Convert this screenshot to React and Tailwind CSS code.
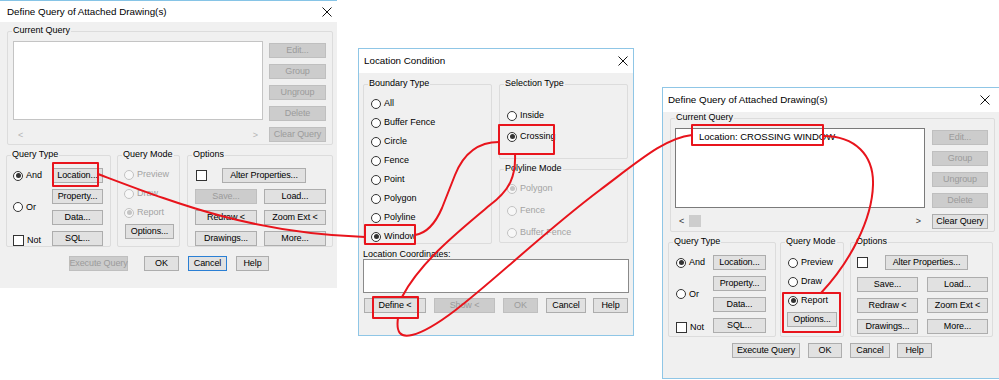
import React from "react";

function Btn({ w, children, disabled, def }) {
  const tone = disabled
    ? "bg-[#cccccc] border-[#bfbfbf] text-[#9b9b9b]"
    : def
    ? "bg-[#e1e1e1] border-[#2a7fd4] text-black"
    : "bg-[#e1e1e1] border-[#adadad] text-black";
  return (
    <div className={`h-[15px] shrink-0 flex items-center justify-center border leading-none whitespace-nowrap tracking-[-0.1px] ${tone} ${w}`}>
      {children}
    </div>
  );
}

function Radio({ checked, disabled, label }) {
  return (
    <div className="flex items-center h-[15px] gap-[3px] whitespace-nowrap">
      <span
        className={`w-[10px] h-[10px] shrink-0 rounded-full border flex items-center justify-center ${
          disabled ? "border-[#c2c2c2] bg-[#f7f7f7]" : "border-[#333333] bg-white"
        }`}
      >
        {checked && (
          <span className={`w-[5px] h-[5px] rounded-full ${disabled ? "bg-[#c4c4c4]" : "bg-[#333333]"}`} />
        )}
      </span>
      <span className={disabled ? "text-[#a3a3a3]" : "text-black"}>{label}</span>
    </div>
  );
}

function Check({ label }) {
  return (
    <div className="flex items-center h-[15px] gap-[3px] whitespace-nowrap">
      <span className="w-[11px] h-[11px] shrink-0 border border-[#333333] bg-white" />
      {label && <span>{label}</span>}
    </div>
  );
}

function Group({ label, className, children }) {
  return (
    <div className={`relative shrink-0 border border-[#dcdcdc] rounded-[2px] ${className}`}>
      <span className="absolute -top-[6px] left-[4px] px-[1px] bg-[#f0f0f0] leading-none text-black whitespace-nowrap">
        {label}
      </span>
      {children}
    </div>
  );
}

function CloseX() {
  return (
    <svg width="10" height="10" viewBox="0 0 10 10" className="shrink-0">
      <path d="M0.5 0.5 L9.5 9.5 M9.5 0.5 L0.5 9.5" stroke="#111" strokeWidth="1" fill="none" />
    </svg>
  );
}

function TitleBar({ title, h, pl, pr }) {
  return (
    <div className={`bg-white flex items-center justify-between shrink-0 ${h} ${pl} ${pr}`}>
      <span className="text-[9.8px] text-black whitespace-nowrap">{title}</span>
      <CloseX />
    </div>
  );
}

function LeftDialog() {
  return (
    <div className="absolute left-0 top-0 w-[337px] h-[288px] border-t border-[#86c4e6] bg-[#f0f0f0] flex flex-col">
      <TitleBar title="Define Query of Attached Drawing(s)" h="h-[21px]" pl="pl-[7px]" pr="pr-[5px]" />
      <div className="flex flex-col pl-[7px] pt-[9px]">
        <Group label="Current Query" className="w-[326px] h-[114px]">
          <div className="flex pl-[5px] pt-[9px]">
            <div className="flex flex-col">
              <div className="w-[250px] h-[79px] bg-white border border-[#c4c4c4]" />
              <div className="w-[250px] h-[30px] flex items-center justify-between px-[5px] text-[#b5b5b5]">
                <span>&lt;</span>
                <span>&gt;</span>
              </div>
            </div>
            <div className="flex flex-col gap-[6px] ml-[6px] pt-[2px]">
              <Btn w="w-[57px]" disabled>Edit...</Btn>
              <Btn w="w-[57px]" disabled>Group</Btn>
              <Btn w="w-[57px]" disabled>Ungroup</Btn>
              <Btn w="w-[57px]" disabled>Delete</Btn>
              <Btn w="w-[57px]" disabled>Clear Query</Btn>
            </div>
          </div>
        </Group>

        <div className="flex -ml-px mt-[10px]">
          <Group label="Query Type" className="w-[105px] h-[92px]">
            <div className="grid grid-cols-[39px_51px] grid-rows-[15px_15px_15px_15px] gap-y-[6px] pl-[6px] pt-[12px]">
              <div className="col-start-1 row-start-1"><Radio checked label="And" /></div>
              <div className="col-start-1 row-start-2 row-span-2 flex items-center"><Radio label="Or" /></div>
              <div className="col-start-1 row-start-4 pt-[2px]"><Check label="Not" /></div>
              <div className="col-start-2 row-start-1"><Btn w="w-[51px]">Location...</Btn></div>
              <div className="col-start-2 row-start-2"><Btn w="w-[51px]">Property...</Btn></div>
              <div className="col-start-2 row-start-3"><Btn w="w-[51px]">Data...</Btn></div>
              <div className="col-start-2 row-start-4"><Btn w="w-[51px]">SQL...</Btn></div>
            </div>
          </Group>
          <Group label="Query Mode" className="w-[63px] h-[92px] ml-[6px]">
            <div className="flex flex-col gap-[4px] pl-[6px] pt-[11px]">
              <Radio disabled label="Preview" />
              <Radio disabled label="Draw" />
              <Radio disabled checked label="Report" />
              <div className="ml-px"><Btn w="w-[49px]">Options...</Btn></div>
            </div>
          </Group>
          <Group label="Options" className="w-[146px] h-[92px] ml-[7px]">
            <div className="flex flex-col pl-[7px] pt-[12px]">
              <div className="flex items-center">
                <div className="ml-px"><Check /></div>
                <div className="ml-[15px]"><Btn w="w-[84px]">Alter Properties...</Btn></div>
              </div>
              <div className="grid grid-cols-[62px_62px] gap-x-[7px] gap-y-[6px] mt-[6px]">
                <Btn w="w-[62px]" disabled>Save...</Btn>
                <Btn w="w-[62px]">Load...</Btn>
                <Btn w="w-[62px]">Redraw &lt;</Btn>
                <Btn w="w-[62px]">Zoom Ext &lt;</Btn>
                <Btn w="w-[62px]">Drawings...</Btn>
                <Btn w="w-[62px]">More...</Btn>
              </div>
            </div>
          </Group>
        </div>

        <div className="flex mt-[9px] pl-[62px]">
          <Btn w="w-[59px]" disabled>Execute Query</Btn>
          <div className="ml-[16px]"><Btn w="w-[35px]">OK</Btn></div>
          <div className="ml-[9px]"><Btn w="w-[39px]" def>Cancel</Btn></div>
          <div className="ml-[9px]"><Btn w="w-[33px]">Help</Btn></div>
        </div>
      </div>
    </div>
  );
}

function MiddleDialog() {
  return (
    <div className="absolute left-[358px] top-[48px] w-[276px] h-[288px] border border-[#8fc6e6] bg-[#f0f0f0] flex flex-col">
      <TitleBar title="Location Condition" h="h-[24px]" pl="pl-[5px]" pr="pr-[5px]" />
      <div className="flex flex-col pl-[4px] pt-[11px]">
        <div className="flex">
          <Group label="Boundary Type" className="w-[129px] h-[160px]">
            <div className="flex flex-col gap-[4px] pl-[7px] pt-[11px]">
              <Radio label="All" />
              <Radio label="Buffer Fence" />
              <Radio label="Circle" />
              <Radio label="Fence" />
              <Radio label="Point" />
              <Radio label="Polygon" />
              <Radio label="Polyline" />
              <Radio checked label="Window" />
            </div>
          </Group>
          <div className="flex flex-col ml-[7px]">
            <Group label="Selection Type" className="w-[129px] h-[75px]">
              <div className="flex flex-col gap-[6px] pl-[7px] pt-[23px]">
                <Radio label="Inside" />
                <Radio checked label="Crossing" />
              </div>
            </Group>
            <Group label="Polyline Mode" className="w-[129px] h-[74px] mt-[10px]">
              <div className="flex flex-col gap-[7px] pl-[7px] pt-[11px]">
                <Radio disabled checked label="Polygon" />
                <Radio disabled label="Fence" />
                <Radio disabled label="Buffer Fence" />
              </div>
            </Group>
          </div>
        </div>
        <div className="h-[10px] mt-[5px] leading-[10px] whitespace-nowrap">Location Coordinates:</div>
        <div className="w-[266px] h-[34px] bg-white border border-[#8a8a8a]" />
        <div className="flex mt-[5px] pl-px">
          <Btn w="w-[62px]">Define &lt;</Btn>
          <div className="ml-[8px]"><Btn w="w-[61px]" disabled>Show &lt;</Btn></div>
          <div className="ml-[8px]"><Btn w="w-[35px]" disabled>OK</Btn></div>
          <div className="ml-[8px]"><Btn w="w-[40px]">Cancel</Btn></div>
          <div className="ml-[7px]"><Btn w="w-[35px]">Help</Btn></div>
        </div>
      </div>
    </div>
  );
}

function RightDialog() {
  return (
    <div className="absolute left-[662px] top-[87px] w-[340px] h-[292px] border border-[#8fc6e6] bg-[#f0f0f0] flex flex-col">
      <TitleBar title="Define Query of Attached Drawing(s)" h="h-[24px]" pl="pl-[5px]" pr="pr-[11px]" />
      <div className="flex flex-col pl-[7px] pt-[6px]">
        <Group label="Current Query" className="w-[325px] h-[114px]">
          <div className="flex pl-[4px] pt-[9px]">
            <div className="flex flex-col">
              <div className="w-[250px] h-[80px] bg-white border border-[#7a7a7a] pl-[23px] pt-[2px]">
                <span className="leading-[12px] whitespace-nowrap text-[9.5px]">Location: CROSSING WINDOW</span>
              </div>
              <div className="w-[250px] h-[26px] flex items-center px-[4px]">
                <span className="text-[#333]">&lt;</span>
                <span className="ml-[5px] w-[12px] h-[12px] bg-[#cdcdcd]" />
                <span className="ml-auto text-[#333]">&gt;</span>
              </div>
            </div>
            <div className="flex flex-col gap-[6px] ml-[7px] pt-[2px]">
              <Btn w="w-[56px]" disabled>Edit...</Btn>
              <Btn w="w-[56px]" disabled>Group</Btn>
              <Btn w="w-[56px]" disabled>Ungroup</Btn>
              <Btn w="w-[56px]" disabled>Delete</Btn>
              <Btn w="w-[56px]">Clear Query</Btn>
            </div>
          </div>
        </Group>

        <div className="flex -ml-[2px] mt-[10px]">
          <Group label="Query Type" className="w-[108px] h-[95px]">
            <div className="grid grid-cols-[37px_53px] grid-rows-[15px_15px_15px_15px] gap-y-[6px] pl-[7px] pt-[12px]">
              <div className="col-start-1 row-start-1"><Radio checked label="And" /></div>
              <div className="col-start-1 row-start-2 row-span-2 flex items-center"><Radio label="Or" /></div>
              <div className="col-start-1 row-start-4 pt-[2px]"><Check label="Not" /></div>
              <div className="col-start-2 row-start-1"><Btn w="w-[53px]">Location...</Btn></div>
              <div className="col-start-2 row-start-2"><Btn w="w-[53px]">Property...</Btn></div>
              <div className="col-start-2 row-start-3"><Btn w="w-[53px]">Data...</Btn></div>
              <div className="col-start-2 row-start-4"><Btn w="w-[53px]">SQL...</Btn></div>
            </div>
          </Group>
          <Group label="Query Mode" className="w-[64px] h-[95px] ml-[4px]">
            <div className="flex flex-col gap-[4px] pl-[7px] pt-[12px]">
              <Radio label="Preview" />
              <Radio label="Draw" />
              <Radio checked label="Report" />
              <div className="-ml-px"><Btn w="w-[50px]">Options...</Btn></div>
            </div>
          </Group>
          <Group label="Options" className="w-[143px] h-[95px] ml-[6px]">
            <div className="flex flex-col pl-[6px] pt-[12px]">
              <div className="flex items-center">
                <Check />
                <div className="ml-[17px]"><Btn w="w-[83px]">Alter Properties...</Btn></div>
              </div>
              <div className="grid grid-cols-[61px_61px] gap-x-[9px] gap-y-[6px] mt-[7px]">
                <Btn w="w-[61px]">Save...</Btn>
                <Btn w="w-[61px]">Load...</Btn>
                <Btn w="w-[61px]">Redraw &lt;</Btn>
                <Btn w="w-[61px]">Zoom Ext &lt;</Btn>
                <Btn w="w-[61px]">Drawings...</Btn>
                <Btn w="w-[61px]">More...</Btn>
              </div>
            </div>
          </Group>
        </div>

        <div className="flex mt-[6px] pl-[62px]">
          <Btn w="w-[68px]">Execute Query</Btn>
          <div className="ml-[8px]"><Btn w="w-[34px]">OK</Btn></div>
          <div className="ml-[8px]"><Btn w="w-[40px]">Cancel</Btn></div>
          <div className="ml-[7px]"><Btn w="w-[35px]">Help</Btn></div>
        </div>
      </div>
    </div>
  );
}

function Annotations() {
  const red = "#e8141c";
  return (
    <svg className="absolute left-0 top-0 pointer-events-none" width="999" height="380" viewBox="0 0 999 380">
      <g fill="none" stroke={red} strokeWidth="2" strokeLinecap="round" strokeLinejoin="round">
        <rect x="53" y="163" width="45" height="23" />
        <rect x="365" y="225" width="50" height="19" />
        <rect x="499" y="125" width="55" height="29" />
        <rect x="373" y="297" width="45" height="21" />
        <rect x="692" y="125" width="131" height="20" />
        <rect x="783" y="293" width="57" height="39" />
        <path d="M98,174 C175,203 250,233 365,237" />
        <path d="M415,235 C428,233 436,222 442,208 L455,175 C463,155 476,142 499,142" />
        <path d="M515,154 C516,176 510,190 490,205 C460,230 420,262 402,297" />
        <path d="M398,318 C396,332 400,338 412,335 C450,326 520,250 600,190 C640,160 665,138 692,135" />
        <path d="M823,136 C855,136 874,155 873,185 C872,220 850,262 821,293" />
      </g>
    </svg>
  );
}

export default function App() {
  return (
    <div className="relative w-[999px] h-[380px] overflow-hidden bg-white text-[9px] leading-none text-black [font-family:'Liberation_Sans',Arial,sans-serif]">
      <LeftDialog />
      <MiddleDialog />
      <RightDialog />
      <Annotations />
    </div>
  );
}
